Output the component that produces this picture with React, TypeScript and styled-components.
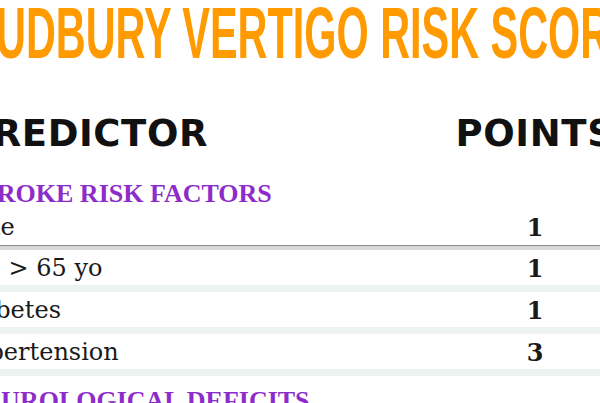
import React from 'react';
import styled, { createGlobalStyle } from 'styled-components';

type Predictor = {
  label: string;
  points: number;
};

type Section = {
  title: string;
  lead: Predictor;
  rows: Predictor[];
};

const sections: Section[] = [
  {
    title: 'STROKE RISK FACTORS',
    lead: { label: 'Male', points: 1 },
    rows: [
      { label: 'Age > 65 yo', points: 1 },
      { label: 'Diabetes', points: 1 },
      { label: 'Hypertension', points: 3 },
    ],
  },
  {
    title: 'NEUROLOGICAL DEFICITS',
    lead: { label: 'Motor or sensory deficit', points: 8 },
    rows: [],
  },
];

const GlobalStyle = createGlobalStyle`
  html, body {
    margin: 0;
    padding: 0;
    background: #fff;
  }
`;

const Page = styled.div`
  width: 600px;
  height: 403px;
  overflow: hidden;
  background: #fff;
`;

// the sheet is wider than the window, so both edges are cut off
const Sheet = styled.div`
  width: 660px;
  margin-left: -35px;
`;

const Title = styled.h1`
  display: flex;
  justify-content: center;
  height: 66px;
  margin: 0;
  padding-left: 16px;
`;

const TitleText = styled.span`
  flex-shrink: 0;
  font-family: 'Liberation Sans', Arial, sans-serif;
  font-weight: 700;
  font-size: 72px;
  line-height: 66px;
  color: #ff9a00;
  white-space: nowrap;
  transform: scaleX(0.575);
  transform-origin: center;
`;

const Grid = styled.div`
  display: grid;
  grid-template-columns: 1fr 180px;
  align-items: center;
`;

const HeaderRow = styled(Grid)`
  margin-top: 49px;
  font-family: 'DejaVu Sans', Verdana, sans-serif;
  font-weight: 700;
  font-size: 37px;
  line-height: 37px;
  letter-spacing: 0.6px;
  color: #111;
`;

const HeaderCell = styled.div<{ $center?: boolean }>`
  text-align: ${(p) => (p.$center ? 'center' : 'left')};
  white-space: nowrap;
`;

const SectionTitle = styled.h2<{ $gap: number }>`
  margin: ${(p) => p.$gap}px 0 0;
  font-family: 'Liberation Serif', 'Times New Roman', serif;
  font-weight: 700;
  font-size: 26px;
  line-height: 31px;
  color: #8d2cca;
  white-space: nowrap;
`;

const Row = styled(Grid)<{ $lead?: boolean }>`
  height: ${(p) => (p.$lead ? 36 : 35)}px;
  font-family: 'DejaVu Serif', Georgia, serif;
  font-size: 24px;
  line-height: 37px;
  color: #1a1a1a;
  border-bottom: ${(p) => (p.$lead ? '1px solid #8a8a8a' : '7px solid #ecf3f0')};
`;

const Table = styled.div`
  border-top: 4px solid #d8d8d8;
`;

const Label = styled.div`
  margin-left: -11px;
  white-space: nowrap;
`;

const Points = styled.div`
  font-weight: 700;
  text-align: center;
`;

const App: React.FC = () => {
  return (
    <Page>
      <GlobalStyle />
      <Sheet>
        <Title>
          <TitleText>SUDBURY VERTIGO RISK SCORE</TitleText>
        </Title>
        <HeaderRow>
          <HeaderCell>PREDICTOR</HeaderCell>
          <HeaderCell $center>POINTS</HeaderCell>
        </HeaderRow>
        {sections.map((section, i) => (
          <div key={section.title}>
            <SectionTitle $gap={i === 0 ? 26 : 9}>{section.title}</SectionTitle>
            <Row $lead>
              <Label>{section.lead.label}</Label>
              <Points>{section.lead.points}</Points>
            </Row>
            {section.rows.length > 0 && (
              <Table>
                {section.rows.map((row) => (
                  <Row key={row.label}>
                    <Label>{row.label}</Label>
                    <Points>{row.points}</Points>
                  </Row>
                ))}
              </Table>
            )}
          </div>
        ))}
      </Sheet>
    </Page>
  );
};

export default App;
